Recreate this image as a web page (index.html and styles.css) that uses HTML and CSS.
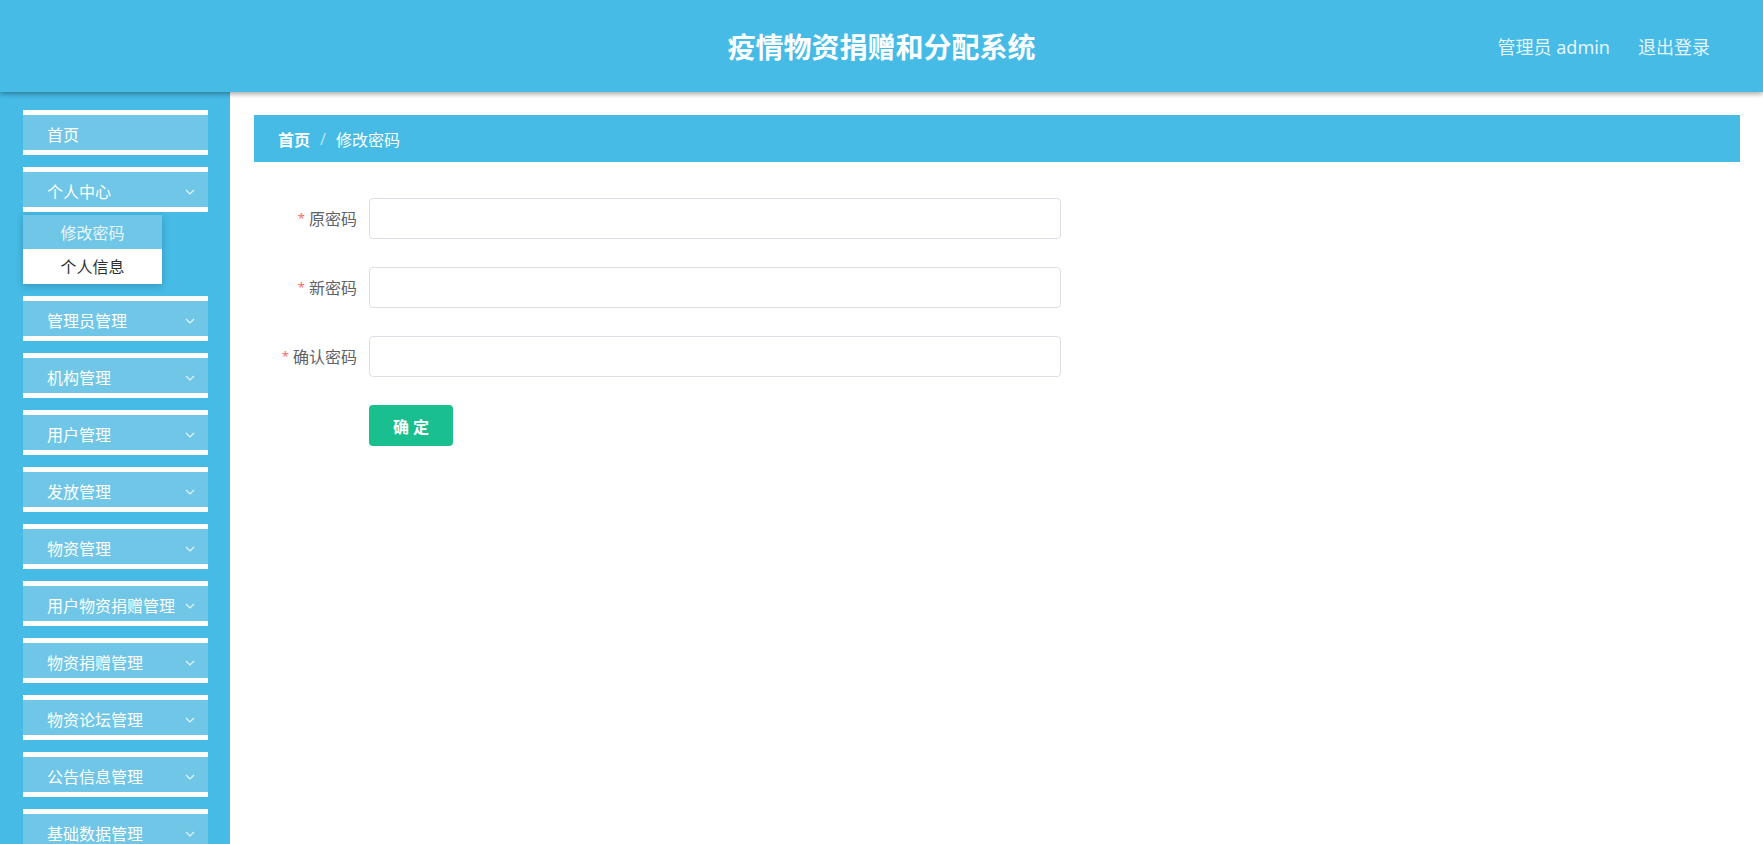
FILE: index.html
```html
<!DOCTYPE html>
<html lang="zh-CN">
<head>
    <meta charset="UTF-8">
    <meta name="viewport" content="width=device-width, initial-scale=1.0">
    <title>疫情物资捐赠和分配系统</title>
    <link rel="stylesheet" href="styles.css">
</head>
<body>
    <header class="topbar">
        <div class="title">疫情物资捐赠和分配系统</div>
        <div class="user">
            <span>管理员 admin</span>
            <span class="logout">退出登录</span>
        </div>
    </header>

    <div class="layout">
        <aside class="sidebar">
            <div class="menu-item">首页</div>
            <div class="menu-item open">个人中心 <svg class="arrow" viewBox="0 0 10 6"><polyline points="1,1 5,5 9,1"/></svg></div>
            <div class="submenu">
                <div class="sub-item active">修改密码</div>
                <div class="sub-item">个人信息</div>
            </div>
            <div class="menu-item">管理员管理 <svg class="arrow" viewBox="0 0 10 6"><polyline points="1,1 5,5 9,1"/></svg></div>
            <div class="menu-item">机构管理 <svg class="arrow" viewBox="0 0 10 6"><polyline points="1,1 5,5 9,1"/></svg></div>
            <div class="menu-item">用户管理 <svg class="arrow" viewBox="0 0 10 6"><polyline points="1,1 5,5 9,1"/></svg></div>
            <div class="menu-item">发放管理 <svg class="arrow" viewBox="0 0 10 6"><polyline points="1,1 5,5 9,1"/></svg></div>
            <div class="menu-item">物资管理 <svg class="arrow" viewBox="0 0 10 6"><polyline points="1,1 5,5 9,1"/></svg></div>
            <div class="menu-item">用户物资捐赠管理 <svg class="arrow" viewBox="0 0 10 6"><polyline points="1,1 5,5 9,1"/></svg></div>
            <div class="menu-item">物资捐赠管理 <svg class="arrow" viewBox="0 0 10 6"><polyline points="1,1 5,5 9,1"/></svg></div>
            <div class="menu-item">物资论坛管理 <svg class="arrow" viewBox="0 0 10 6"><polyline points="1,1 5,5 9,1"/></svg></div>
            <div class="menu-item">公告信息管理 <svg class="arrow" viewBox="0 0 10 6"><polyline points="1,1 5,5 9,1"/></svg></div>
            <div class="menu-item">基础数据管理 <svg class="arrow" viewBox="0 0 10 6"><polyline points="1,1 5,5 9,1"/></svg></div>
        </aside>

        <main class="main">
            <div class="breadcrumb">
                <span class="crumb-home">首页</span>
                <span class="sep">/</span>
                <span>修改密码</span>
            </div>

            <form class="form">
                <div class="form-item">
                    <label class="label"><i>*</i>原密码</label>
                    <input type="password" class="input">
                </div>
                <div class="form-item">
                    <label class="label"><i>*</i>新密码</label>
                    <input type="password" class="input">
                </div>
                <div class="form-item">
                    <label class="label"><i>*</i>确认密码</label>
                    <input type="password" class="input">
                </div>
                <div class="form-item">
                    <span class="label"></span>
                    <button type="button" class="btn">确 定</button>
                </div>
            </form>
        </main>
    </div>
</body>
</html>
```

FILE: styles.css
```css
body {
    margin: 0;
    font-family: "Noto Sans", "Noto Sans CJK SC", sans-serif;
    background: #fff;
    overflow: hidden;
}
.topbar {
    position: relative;
    z-index: 2;
    height: 92px;
    background: #45bbe6;
    box-shadow: 0 2px 5px rgba(0, 0, 0, 0.35);
    display: flex;
    align-items: center;
    justify-content: center;
}
.title {
    color: #fff;
    font-size: 28px;
    font-weight: bold;
}
.user {
    position: absolute;
    right: 53px;
    top: 0;
    height: 92px;
    display: flex;
    align-items: center;
    gap: 28px;
    color: #e6f5fb;
    font-size: 18px;
}
.layout {
    display: flex;
    height: calc(100vh - 92px);
}
.sidebar {
    width: 230px;
    flex-shrink: 0;
    background: #45bbe6;
    padding: 18px 0 0 23px;
    box-sizing: border-box;
    overflow: hidden;
}
.menu-item {
    width: 185px;
    height: 45px;
    box-sizing: border-box;
    border-top: 5px solid #fff;
    border-bottom: 5px solid #fff;
    background: #6fc6e6;
    color: #fff;
    font-size: 16px;
    padding: 3px 13px 0 24px;
    margin-bottom: 12px;
    display: flex;
    align-items: center;
    justify-content: space-between;
    white-space: nowrap;
}
.menu-item.open {
    margin-bottom: 3px;
}
.arrow {
    width: 10px;
    height: 6px;
    margin-top: 1px;
    fill: none;
    stroke: #e4f5fb;
    stroke-width: 1.2;
}
.submenu {
    width: 139px;
    margin-bottom: 12px;
    box-shadow: 0 2px 8px rgba(0, 0, 0, 0.2);
    font-size: 16px;
}
.sub-item {
    height: 35px;
    line-height: 37px;
    text-align: center;
    background: #fff;
    color: #303133;
}
.sub-item.active {
    height: 34px;
    line-height: 36px;
    background: #6fc6e6;
    color: #e8f6fb;
}
.main {
    flex: 1;
    padding: 23px 23px 0 24px;
}
.breadcrumb {
    height: 47px;
    background: #45bbe6;
    display: flex;
    align-items: center;
    padding-left: 24px;
    font-size: 16px;
    color: #fff;
}
.crumb-home {
    font-weight: bold;
}
.sep {
    margin: 0 10px;
    color: #b9e3f3;
}
.form {
    margin-top: 36px;
}
.form-item {
    display: flex;
    align-items: center;
    margin-bottom: 28px;
}
.label {
    width: 103px;
    padding-right: 12px;
    padding-bottom: 2px;
    text-align: right;
    font-size: 16px;
    color: #606266;
}
.label i {
    font-style: normal;
    font-size: 13px;
    vertical-align: 2px;
    color: #f56c6c;
    margin-right: 4px;
}
.input {
    width: 692px;
    height: 41px;
    box-sizing: border-box;
    border: 1px solid #dcdfe6;
    border-radius: 4px;
    outline: none;
    padding: 0 15px;
}
.btn {
    width: 84px;
    height: 41px;
    border: none;
    border-radius: 4px;
    background: #19bf8e;
    color: #fff;
    font-size: 16px;
    font-weight: bold;
    font-family: inherit;
    cursor: pointer;
}
```
